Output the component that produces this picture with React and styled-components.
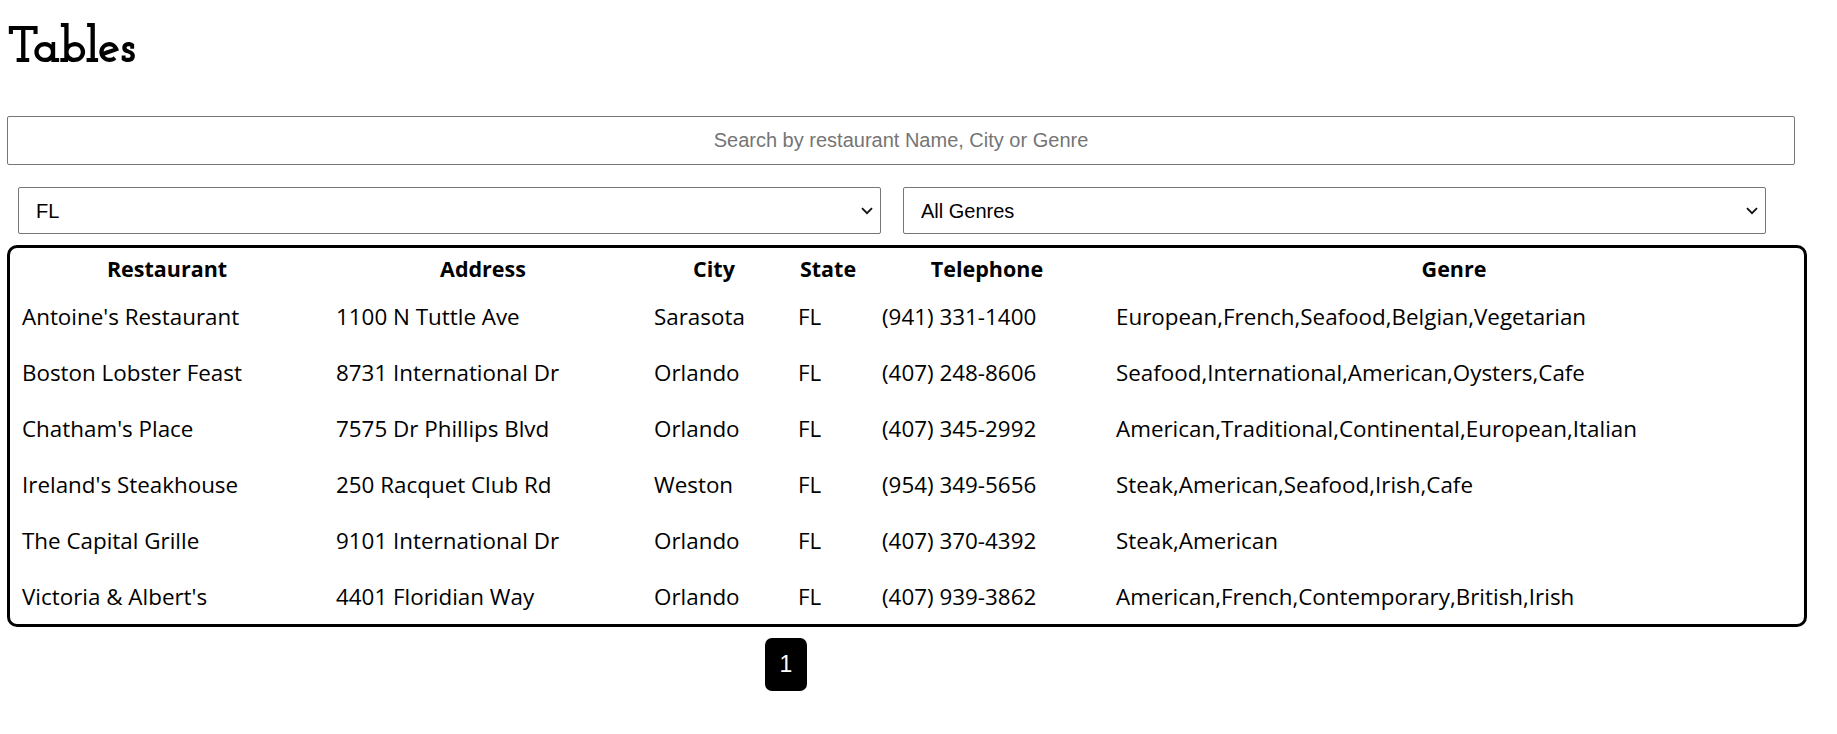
import React from 'react'
import styled, {createGlobalStyle} from 'styled-components'

const GlobalStyle = createGlobalStyle`
  body {
    margin: 0;
    background: #fff;
    color: #000;
  }
`

const Page = styled.div`
  padding: 0 0 0 7px;
  width: 1800px;
`

const Title = styled.h1`
  margin: 21px 0 0 0;
  font-family: "Josefin Slab", "Liberation Serif", serif;
  font-size: 52px;
  font-weight: 700;
  letter-spacing: -1.6px;
  line-height: 57px;
`

const SearchInput = styled.input`
  display: block;
  box-sizing: border-box;
  margin-top: 38px;
  width: 1788px;
  height: 49px;
  border: 1px solid #767676;
  border-radius: 2px;
  font-family: "Liberation Sans", Arial, sans-serif;
  font-size: 20px;
  text-align: center;

  &::placeholder {
    color: #757575;
  }
`

const Filters = styled.div`
  display: flex;
  gap: 22px;
  margin-top: 22px;
  padding-left: 11px;
`

const SelectWrap = styled.div`
  position: relative;
  width: 863px;
  height: 47px;

  svg {
    position: absolute;
    right: 8px;
    top: 20px;
    pointer-events: none;
  }
`

const Select = styled.select`
  appearance: none;
  box-sizing: border-box;
  width: 100%;
  height: 100%;
  padding: 0 30px 0 17px;
  border: 1px solid #767676;
  border-radius: 2px;
  background: #fff;
  color: #000;
  font-family: "Liberation Sans", Arial, sans-serif;
  font-size: 20px;
`

const Chevron = () => (
  <svg width="12" height="8" viewBox="0 0 12 8">
    <path d="M1 1.2 L6 6.2 L11 1.2" fill="none" stroke="#111" strokeWidth="1.8" />
  </svg>
)

const TableBox = styled.div`
  box-sizing: border-box;
  margin-top: 11px;
  width: 1800px;
  border: 3px solid #000;
  border-radius: 10px;
  overflow: hidden;
`

const Table = styled.table`
  width: 100%;
  border-collapse: collapse;
  table-layout: fixed;
  font-family: "Open Sans", "Noto Sans", sans-serif;
`

const HeadCell = styled.th`
  height: 40px;
  padding: 0 12px;
  font-size: 21.5px;
  font-weight: 700;
  text-align: center;
  vertical-align: middle;
`

const Cell = styled.td`
  height: 56px;
  padding: 0 12px;
  font-size: 22.4px;
  text-align: left;
  vertical-align: middle;
  white-space: nowrap;
`

const Pager = styled.div`
  display: flex;
  margin: 11px 0 0 758px;
`

const PageBtn = styled.button`
  width: 42px;
  height: 53px;
  border: none;
  border-radius: 7px;
  background: #000;
  color: #fff;
  font-family: "Liberation Sans", Arial, sans-serif;
  font-size: 23px;
  padding: 0;
`

const columns = [
  {title: 'Restaurant', width: 314},
  {title: 'Address', width: 318},
  {title: 'City', width: 144},
  {title: 'State', width: 84},
  {title: 'Telephone', width: 234},
  {title: 'Genre', width: 700},
]

const restaurants = [
  ["Antoine's Restaurant", '1100 N Tuttle Ave', 'Sarasota', 'FL', '(941) 331-1400', 'European,French,Seafood,Belgian,Vegetarian'],
  ['Boston Lobster Feast', '8731 International Dr', 'Orlando', 'FL', '(407) 248-8606', 'Seafood,International,American,Oysters,Cafe'],
  ["Chatham's Place", '7575 Dr Phillips Blvd', 'Orlando', 'FL', '(407) 345-2992', 'American,Traditional,Continental,European,Italian'],
  ["Ireland's Steakhouse", '250 Racquet Club Rd', 'Weston', 'FL', '(954) 349-5656', 'Steak,American,Seafood,Irish,Cafe'],
  ['The Capital Grille', '9101 International Dr', 'Orlando', 'FL', '(407) 370-4392', 'Steak,American'],
  ["Victoria & Albert's", '4401 Floridian Way', 'Orlando', 'FL', '(407) 939-3862', 'American,French,Contemporary,British,Irish'],
]

const App = () => {
  return (
    <Page>
      <GlobalStyle />
      <Title>Tables</Title>
      <SearchInput placeholder="Search by restaurant Name, City or Genre" />
      <Filters>
        <SelectWrap>
          <Select defaultValue="FL">
            <option value="All">All States</option>
            <option value="FL">FL</option>
          </Select>
          <Chevron />
        </SelectWrap>
        <SelectWrap>
          <Select defaultValue="All">
            <option value="All">All Genres</option>
          </Select>
          <Chevron />
        </SelectWrap>
      </Filters>
      <TableBox>
        <Table>
          <colgroup>
            {columns.map(c => <col key={c.title} style={{width: c.width}} />)}
          </colgroup>
          <thead>
            <tr>
              {columns.map(c => <HeadCell key={c.title}>{c.title}</HeadCell>)}
            </tr>
          </thead>
          <tbody>
            {restaurants.map(r => (
              <tr key={r[0]}>
                {r.map((v, i) => <Cell key={i}>{v}</Cell>)}
              </tr>
            ))}
          </tbody>
        </Table>
      </TableBox>
      <Pager>
        <PageBtn>1</PageBtn>
      </Pager>
    </Page>
  )
}

export default App
